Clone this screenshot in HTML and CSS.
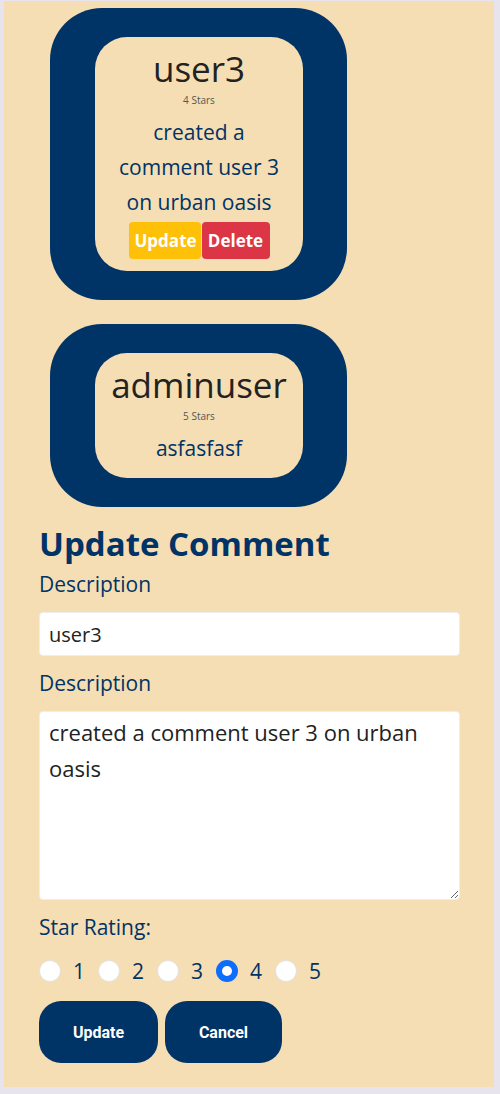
FILE: index.html
```html
<!DOCTYPE html>
<html>
<head>
<meta charset="utf-8">
<link rel="stylesheet" href="styles.css">
</head>
<body>
<div class="page">
  <div class="card">
    <div class="card-inner">
      <div class="name">user3</div>
      <div class="stars">4 Stars</div>
      <div class="text">created a comment user 3 on urban oasis</div>
      <div class="actions">
        <button class="btn-sm btn-warn">Update</button><button class="btn-sm btn-danger">Delete</button>
      </div>
    </div>
  </div>
  <div class="card">
    <div class="card-inner">
      <div class="name">adminuser</div>
      <div class="stars">5 Stars</div>
      <div class="text">asfasfasf</div>
    </div>
  </div>
  <form class="form">
    <h2 class="title">Update Comment</h2>
    <label class="label">Description</label>
    <input class="field" type="text" value="user3">
    <label class="label">Description</label>
    <textarea class="field area">created a comment user 3 on urban oasis</textarea>
    <div class="label">Star Rating:</div>
    <div class="radios">
      <input type="radio" name="r" class="radio"><span class="num">1</span>
      <input type="radio" name="r" class="radio"><span class="num">2</span>
      <input type="radio" name="r" class="radio"><span class="num">3</span>
      <input type="radio" name="r" class="radio" checked><span class="num">4</span>
      <input type="radio" name="r" class="radio"><span class="num">5</span>
    </div>
    <div class="buttons">
      <button type="button" class="btn">Update</button>
      <button type="button" class="btn btn-cancel">Cancel</button>
    </div>
  </form>
</div>
</body>
</html>
```
FILE: styles.css
```css
* { box-sizing: border-box; }
html, body { margin: 0; padding: 0; }
body {
  background: #e8e4ee;
  font-family: "Open Sans", "Noto Sans", sans-serif;
  color: #003366;
}
.page {
  background: #f5deb3;
  margin: 1px 6px 7px 4px;
  padding: 7px 0 22px 0;
  min-height: 1086px;
}
.card {
  width: 297px;
  margin-left: 46px;
  margin-bottom: 24px;
  background: #003366;
  border-radius: 52px;
  padding: 29px 44px 29px 45px;
}
.card-inner {
  background: #f5deb3;
  border-radius: 32px;
  text-align: center;
  padding: 8px 6px 12px;
}
.name {
  font-size: 35px;
  line-height: 48px;
  color: #222;
}
.stars {
  font-size: 10px;
  line-height: 14px;
  color: #555;
}
.text {
  font-size: 21px;
  line-height: 35px;
  color: #003366;
  margin-top: 8px;
  padding: 0 10px;
}
.actions {
  margin-top: 2px;
  display: flex;
  justify-content: center;
}
.btn-sm {
  border: none;
  color: #fff;
  font-family: "Open Sans", sans-serif;
  font-weight: 700;
  font-size: 17px;
  height: 37px;
  border-radius: 4px;
  padding: 0 6px;
}
.btn-warn { background: #ffc107; width: 72px; }
.btn-danger { background: #dc3545; width: 68px; margin-left: 1px; }
.form {
  padding: 0 34px 0 35px;
  margin-top: -7px;
}
.title {
  margin: 0;
  font-size: 33px;
  line-height: 40px;
  font-weight: 700;
  color: #003366;
}
.label {
  display: block;
  font-size: 21px;
  line-height: 32px;
  margin-top: 4px;
  margin-bottom: 12px;
}
.field {
  display: block;
  width: 100%;
  height: 44px;
  border: 1px solid #eee;
  border-radius: 4px;
  background: #fff;
  font-family: "Open Sans", sans-serif;
  font-size: 20px;
  color: #222;
  padding: 0 9px;
  margin-bottom: 11px;
}
.area {
  height: 189px;
  padding: 2px 9px;
  font-size: 22px;
  line-height: 36px;
  resize: vertical;
}
.radios {
  display: flex;
  align-items: center;
  height: 34px;
  margin-top: -1px;
}
.radio {
  appearance: none;
  -webkit-appearance: none;
  width: 22px;
  height: 22px;
  margin: 0 12px 0 0;
  border-radius: 50%;
  background: #fff;
  border: 1px solid #e3e3e3;
}
.radio:checked {
  border: 6px solid #0d6efd;
}
.num {
  font-size: 21px;
  margin-right: 13px;
  color: #003366;
}
.buttons {
  display: flex;
  gap: 7px;
  margin-top: 13px;
}
.btn {
  height: 62px;
  width: 119px;
  border: none;
  border-radius: 22px;
  background: #003366;
  color: #fff;
  font-family: "Roboto", sans-serif;
  font-weight: 700;
  font-size: 16px;
}
.btn-cancel { width: 117px; }
```
